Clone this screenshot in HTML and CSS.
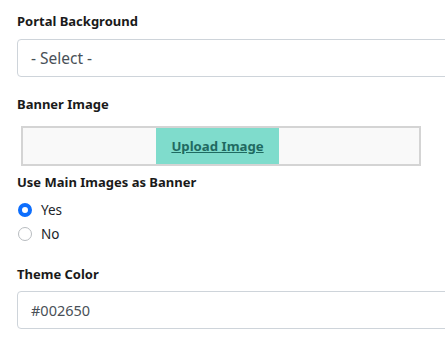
FILE: index.html
```html
<!DOCTYPE html>
<html lang="en">
<head>
  <meta charset="UTF-8">
  <title>Portal Settings</title>
  <link rel="stylesheet" href="styles.css">
</head>
<body>

  <div class="form">
    <div class="group">
      <label class="label">Portal Background</label>
      <div class="field">- Select -</div>
    </div>

    <div class="group banner-group">
      <label class="label">Banner Image</label>
      <div class="banner">
        <a class="upload" href="#">Upload Image</a>
      </div>
    </div>

    <div class="group radios">
      <label class="label">Use Main Images as Banner</label>
      <div class="radio"><span class="dot checked"></span>Yes</div>
      <div class="radio"><span class="dot"></span>No</div>
    </div>

    <div class="group theme">
      <label class="label">Theme Color</label>
      <div class="field small">#002650</div>
    </div>
  </div>

</body>
</html>
```

FILE: styles.css
```css
html, body {
  margin: 0;
  padding: 0;
  overflow: hidden;
  background: #fff;
}

body {
  font-family: 'Noto Sans', 'Open Sans', sans-serif;
  color: #212529;
}

.form {
  width: 428px;
  padding: 12px 0 0 17px;
  overflow: visible;
}

.label {
  display: block;
  font-size: 13px;
  font-weight: bold;
  color: #1a1a1a;
  line-height: 18px;
  margin-bottom: 9px;
}

.group {
  margin-bottom: 18px;
}

.field {
  width: 460px;
  height: 36px;
  border: 1px solid #ced4da;
  border-radius: 4px;
  padding: 0 13px;
  font-size: 15.5px;
  line-height: 36px;
  color: #495057;
}

.field.small {
  font-size: 14.5px;
}

.banner-group {
  margin-bottom: 0;
}

.banner-group .label {
  margin-bottom: 13px;
}

.banner {
  margin-left: 4px;
  width: 396px;
  height: 36px;
  border: 2px solid #d4d4d4;
  background: #f9f9f9;
  display: flex;
  justify-content: center;
}

.upload {
  display: block;
  margin-left: -7px;
  width: 123px;
  background: #7fdccc;
  color: #1f6a61;
  font-size: 13.2px;
  font-weight: bold;
  line-height: 36px;
  text-align: center;
  text-decoration: underline;
}

.radios {
  margin-top: 7px;
  margin-bottom: 19px;
}

.radios .label {
  margin-bottom: 7px;
}

.radio {
  display: flex;
  align-items: center;
  font-size: 13.5px;
  height: 24px;
  color: #212529;
}

.dot {
  width: 14px;
  height: 14px;
  box-sizing: border-box;
  border: 1px solid #b8bcc0;
  border-radius: 50%;
  background: #fff;
  margin-right: 9px;
  margin-left: 1px;
}

.dot.checked {
  border: 4px solid #0d6efd;
}

.theme .label {
  margin-bottom: 8px;
}
```
